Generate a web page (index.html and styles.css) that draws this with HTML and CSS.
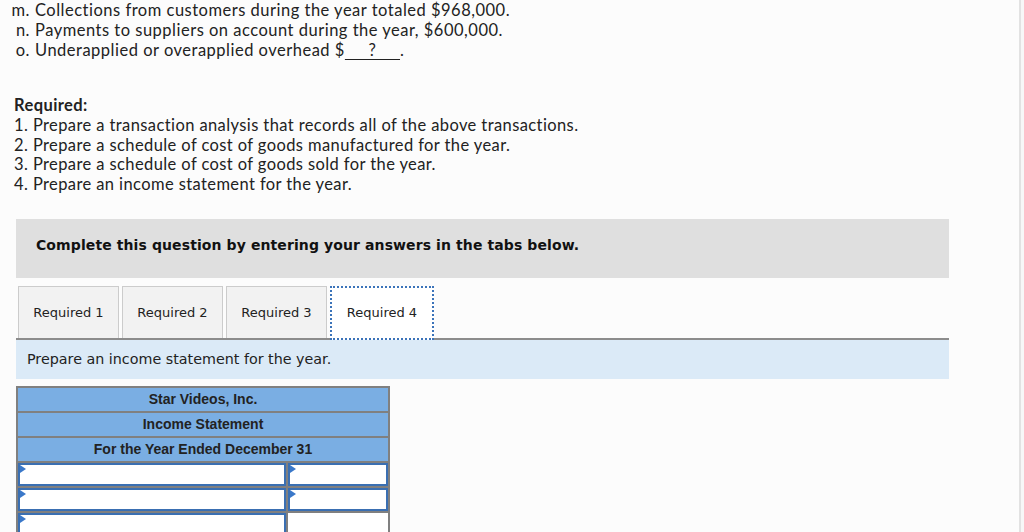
FILE: index.html
```html
<!doctype html>
<html>
  <head>
    <title>Star Videos, Inc.</title>
    <link rel="stylesheet" href="styles.css">
  </head>
  <body>
    <div id='page'>
      <ul class='items'>
        <li><span class='mark'>m.</span>Collections from customers during the year totaled $968,000.</li>
        <li><span class='mark'>n.</span>Payments to suppliers on account during the year, $600,000.</li>
        <li><span class='mark'>o.</span>Underapplied or overapplied overhead $<span class='blank'>&nbsp;&nbsp;&nbsp;&nbsp;&nbsp;?&nbsp;&nbsp;&nbsp;&nbsp;&nbsp;</span>.</li>
      </ul>
      <div class='required'>
        <b>Required:</b><br />
        1. Prepare a transaction analysis that records all of the above transactions.<br />
        2. Prepare a schedule of cost of goods manufactured for the year.<br />
        3. Prepare a schedule of cost of goods sold for the year.<br />
        4. Prepare an income statement for the year.
      </div>
      <div class='notice'>Complete this question by entering your answers in the tabs below.</div>
      <div class='tabs'>
        <div class='tab'>Required 1</div>
        <div class='tab'>Required 2</div>
        <div class='tab'>Required 3</div>
        <div class='tab active'>Required 4</div>
      </div>
      <div class='prompt'>Prepare an income statement for the year.</div>
      <table class='sheet'>
        <tr><th colspan='2'>Star Videos, Inc.</th></tr>
        <tr><th colspan='2'>Income Statement</th></tr>
        <tr><th colspan='2'>For the Year Ended December 31</th></tr>
        <tr><td class='cell'><span class='flag'></span></td><td class='cell amt'><span class='flag'></span></td></tr>
        <tr><td class='cell'><span class='flag'></span></td><td class='cell amt'><span class='flag'></span></td></tr>
        <tr><td class='cell'><span class='flag'></span></td><td class='plain'></td></tr>
      </table>
    </div>
  </body>
</html>
```

FILE: styles.css
```css
body {
  margin:             0;
  background-color:   #f7f7f7;
  font-family:        Lato, "Open Sans", sans-serif;
  color:              #222;
  overflow:           hidden;
}
#page {
  width:              1019px;
  height:             532px;
  background-color:   #fcfcfc;
  border-right:       2px solid #e2e2e2;
  overflow:           hidden;
}
.items {
  list-style:         none;
  margin:             0;
  padding:            0;
  font-size:          16.5px;
  letter-spacing:     0.5px;
  line-height:        20px;
}
.items li {
  display:            flex;
}
.mark {
  width:              35px;
  text-align:         right;
  padding-right:      5px;
  box-sizing:         border-box;
  flex:               none;
}
.blank {
  text-decoration:        underline;
  text-underline-offset:  3px;
}
.required {
  margin:             36px 0 0 14px;
  font-size:          16.5px;
  letter-spacing:     0.4px;
  line-height:        19.8px;
}
.notice {
  margin:             24px 0 0 16px;
  width:              913px;
  height:             52px;
  padding:            0 0 7px 20px;
  background-color:   #dfdfdf;
  font-family:        "DejaVu Sans", Verdana, sans-serif;
  font-weight:        bold;
  font-size:          14px;
  letter-spacing:     0.1px;
  line-height:        52px;
  color:              #111;
}
.tabs {
  display:            flex;
  gap:                3px;
  margin:             8px 0 0 18px;
  height:             52px;
}
.tab {
  width:              99px;
  height:             51px;
  border:             1px solid #ccc;
  border-bottom:      none;
  background-color:   #f2f2f2;
  font-family:        "DejaVu Sans", Verdana, sans-serif;
  font-size:          13px;
  line-height:        52px;
  text-align:         center;
  color:              #222;
}
.tab.active {
  width:              100px;
  height:             50px;
  background-color:   #fff;
  border:             2px dotted #3b73b9;
  line-height:        50px;
}
.prompt {
  margin-left:        16px;
  width:              922px;
  height:             39px;
  padding-left:       11px;
  border-top:         2px solid #8c8c8c;
  background-color:   #dbeaf7;
  font-family:        "DejaVu Sans", Verdana, sans-serif;
  font-size:          14.3px;
  line-height:        39px;
  color:              #222;
}
.sheet {
  margin:             7px 0 0 16px;
  width:              374px;
  border-collapse:    collapse;
  border:             2px solid #808080;
  font-family:        "Liberation Sans", Arial, sans-serif;
}
.sheet th {
  height:             23px;
  padding:            0;
  background-color:   #7aaee3;
  border:             2px solid #808080;
  font-size:          14px;
  color:              #222;
}
.sheet td {
  height:             23px;
  padding:            0;
  border:             2px solid #808080;
  position:           relative;
  background-color:   #fff;
}
.sheet td.cell {
  box-shadow:         inset 0 0 0 2px #3a6fb2;
}
.sheet td.amt {
  width:              100px;
}
.sheet td.plain {
  border-top:         2px solid #111;
}
.flag {
  position:           absolute;
  left:               2px;
  top:                2px;
  width:              0;
  height:             0;
  border-top:         4px solid transparent;
  border-bottom:      4px solid transparent;
  border-left:        6px solid #3a78c9;
}
```
